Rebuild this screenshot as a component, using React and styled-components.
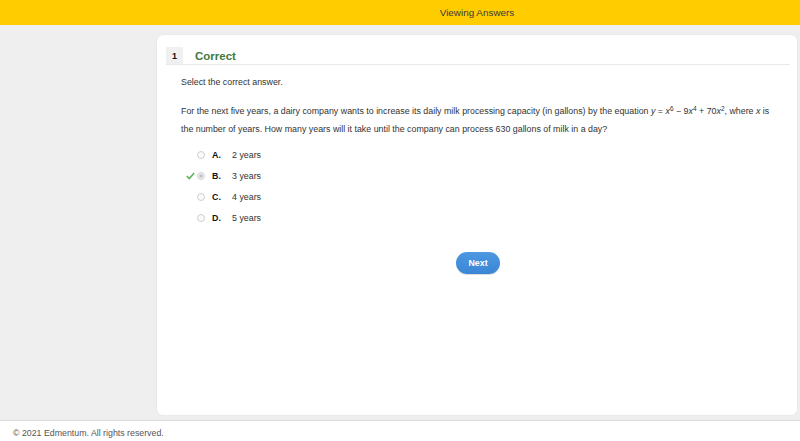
import React from "react";
import styled, { createGlobalStyle } from "styled-components";

const Global = createGlobalStyle`
  html, body { margin: 0; padding: 0; background: #ffffff; }
  body { font-family: Arial, "Liberation Sans", Helvetica, sans-serif; color: #333; }
  * { box-sizing: border-box; }
`;

const Page = styled.div`
  width: 800px;
  height: 441px;
  display: flex;
  flex-direction: column;
  overflow: hidden;
`;

const TopBar = styled.header`
  height: 25px;
  flex: none;
  background: #ffcc00;
  display: flex;
  padding-left: 157px;
`;

const TopTitle = styled.div`
  width: 640px;
  text-align: center;
  line-height: 25px;
  font-size: 9.9px;
  color: #3a3a3a;
`;

const Main = styled.main`
  flex: 1;
  background: #efeff0;
  padding: 10px 3px 5px 157px;
  display: flex;
`;

const Card = styled.section`
  width: 640px;
  height: 380px;
  background: #ffffff;
  border-radius: 6px;
  box-shadow: 0 0 2px rgba(0, 0, 0, 0.08);
  padding: 12px 7px 0 9px;
  display: flex;
  flex-direction: column;
`;

const QHeader = styled.div`
  display: flex;
  align-items: center;
  border-bottom: 1px solid #e9e9e9;
  height: 18px;
`;

const QNumber = styled.div`
  width: 17px;
  height: 17px;
  background: #f0f0f0;
  display: flex;
  align-items: center;
  justify-content: center;
  font-weight: bold;
  font-size: 9px;
  color: #111;
`;

const QStatus = styled.div`
  margin-left: 12px;
  font-weight: bold;
  font-size: 11.5px;
  color: #3f7a3f;
`;

const Body = styled.div`
  padding: 0 15px;
  font-size: 8.85px;
  color: #333;
`;

const Line = styled.p`
  margin: ${(p) => p.$mt || 0}px 0 0;
  line-height: 18px;
`;

const Options = styled.div`
  margin-top: 6px;
  display: flex;
  flex-direction: column;
`;

const OptionRow = styled.div`
  height: 21px;
  display: flex;
  align-items: center;
`;

const CheckSlot = styled.div`
  width: 16px;
  display: flex;
  align-items: center;
  justify-content: flex-start;
  padding-left: 5px;
`;

const Radio = styled.span`
  width: 8px;
  height: 8px;
  border-radius: 50%;
  border: 1px solid #cfcfcf;
  background: #fafafa;
  display: flex;
  align-items: center;
  justify-content: center;
  margin-right: 7px;
  &::after {
    content: "";
    display: ${(p) => (p.$checked ? "block" : "none")};
    width: 4px;
    height: 4px;
    border-radius: 50%;
    background: #c4c4c4;
  }
`;

const Letter = styled.span`
  width: 20px;
  font-weight: bold;
  color: #111;
`;

const OptionText = styled.span`
  color: #333;
`;

const ButtonRow = styled.div`
  margin-top: 24px;
  display: flex;
  justify-content: center;
`;

const NextButton = styled.button`
  width: 44px;
  height: 22px;
  border: none;
  border-radius: 11px;
  background: linear-gradient(#4d98e0, #3a86d6);
  color: #fff;
  font-family: inherit;
  font-weight: bold;
  font-size: 8.85px;
  padding: 0;
  box-shadow: 0 1px 1px rgba(0, 0, 0, 0.15);
`;

const Footer = styled.footer`
  height: 21px;
  flex: none;
  border-top: 1px solid #dadada;
  background: #ffffff;
  padding-left: 13px;
  font-size: 8.8px;
  line-height: 24px;
  color: #555;
`;

const Sup = styled.sup`
  font-size: 6.5px;
  line-height: 0;
  vertical-align: 3px;
`;

const Check = () => (
  <svg width="9" height="8" viewBox="0 0 9 8">
    <path d="M0.8 4.2 L3.3 6.6 L8.2 0.9" fill="none" stroke="#5cb85c" strokeWidth="1.6" />
  </svg>
);

const options = [
  { letter: "A.", text: "2 years" },
  { letter: "B.", text: "3 years", correct: true, checked: true },
  { letter: "C.", text: "4 years" },
  { letter: "D.", text: "5 years" },
];

export default function App() {
  return (
    <>
      <Global />
      <Page>
        <TopBar>
          <TopTitle>Viewing Answers</TopTitle>
        </TopBar>
        <Main>
          <Card>
            <QHeader>
              <QNumber>1</QNumber>
              <QStatus>Correct</QStatus>
            </QHeader>
            <Body>
              <Line $mt={8}>Select the correct answer.</Line>
              <Line $mt={11}>
                For the next five years, a dairy company wants to increase its daily milk processing capacity (in gallons) by the equation <i>y</i> = <i>x</i>
                <Sup>6</Sup> − 9<i>x</i>
                <Sup>4</Sup> + 70<i>x</i>
                <Sup>2</Sup>, where <i>x</i> is the number of years. How many years will it take until the company can process 630 gallons of milk in a day?
              </Line>
              <Options>
                {options.map((o) => (
                  <OptionRow key={o.letter}>
                    <CheckSlot>{o.correct && <Check />}</CheckSlot>
                    <Radio $checked={o.checked} />
                    <Letter>{o.letter}</Letter>
                    <OptionText>{o.text}</OptionText>
                  </OptionRow>
                ))}
              </Options>
              <ButtonRow>
                <NextButton>Next</NextButton>
              </ButtonRow>
            </Body>
          </Card>
        </Main>
        <Footer>© 2021 Edmentum. All rights reserved.</Footer>
      </Page>
    </>
  );
}
